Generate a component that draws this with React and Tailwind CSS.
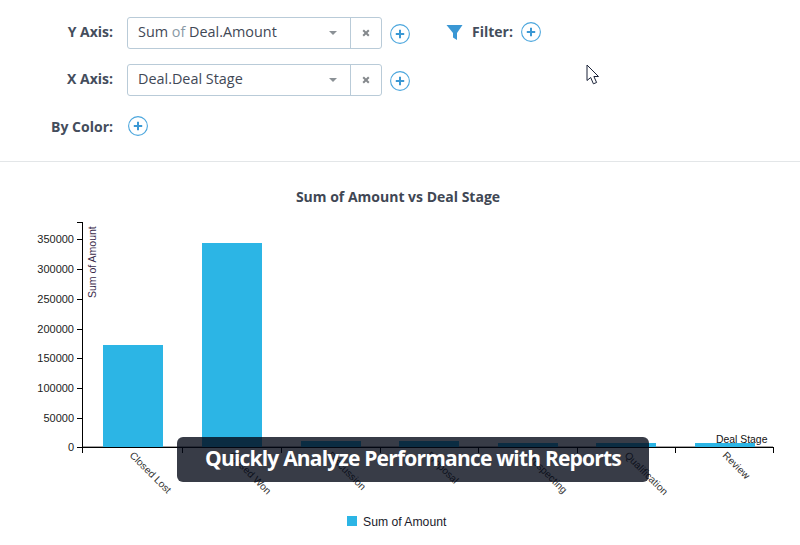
import React from "react";

const openSans = { fontFamily: '"Open Sans", sans-serif' };

function Plus({ className = "" }) {
  return (
    <svg width="20" height="20" viewBox="0 0 20 20" className={`shrink-0 ${className}`}>
      <circle cx="10" cy="10" r="9.4" fill="white" stroke="#4ba6dd" strokeWidth="1.1" />
      <path d="M10 5.8v8.4M5.8 10h8.4" stroke="#3b98d4" strokeWidth="2" />
    </svg>
  );
}

function Select({ children }) {
  return (
    <div className="w-[255px] h-[32px] flex border border-[#b9cbd8] rounded-[3px] bg-white">
      <div className="flex-1 flex items-center pl-[10px] pr-[13px] pb-[2px] justify-between text-[14.4px] text-[#3f4856]">
        <span>{children}</span>
        <span className="w-0 h-0 mt-[2px] border-x-[4px] border-x-transparent border-t-[4px] border-t-[#8b9196]" />
      </div>
      <div className="w-[31px] border-l border-[#b9cbd8] flex items-center justify-center">
        <svg width="8" height="8" viewBox="0 0 8 8">
          <path d="M1.2 1.2l5.6 5.6M6.8 1.2L1.2 6.8" stroke="#85898d" strokeWidth="2" />
        </svg>
      </div>
    </div>
  );
}

const yTicks = [
  [239, "350000"],
  [269, "300000"],
  [299, "250000"],
  [329, "200000"],
  [358, "150000"],
  [388, "100000"],
  [418, "50000"],
  [447, "0"],
];
const xTicks = [82, 182, 281, 380, 478, 577, 675, 773];
const bars = [
  [103, 345, "Closed Lost", 129, 456],
  [202, 243, "Closed Won", 228, 456],
  [301, 441, "Discussion", 327, 456],
  [399, 441, "Proposal", 426, 456],
  [498, 443, "Prospecting", 525, 456],
  [596, 443, "Qualification", 624, 456],
  [695, 443, "Review", 722, 456],
];

function Chart() {
  return (
    <svg
      width="800"
      height="383"
      viewBox="0 162 800 383"
      className="block"
      style={{ fontFamily: '"Liberation Sans", Arial, sans-serif' }}
    >
      <text x="398" y="202" textAnchor="middle" fontSize="14" fontWeight="700" fill="#3f4754" style={openSans}>
        Sum of Amount vs Deal Stage
      </text>
      <line x1="82" x2="773" y1="446.5" y2="446.5" stroke="#a4a4a4" strokeWidth="1" />
      {bars.map(([x, top]) => (
        <rect key={x} x={x} y={top} width="60" height={447 - top} fill="#2cb5e5" />
      ))}
      <line x1="82" x2="773" y1="447.5" y2="447.5" stroke="#000" strokeWidth="1" />
      <path d="M82.5 222v231" stroke="#000" fill="none" />
      <path d="M77 222.5h6" stroke="#000" />
      {yTicks.map(([y, t]) => (
        <g key={t}>
          <line x1="77" x2="82" y1={y + 0.5} y2={y + 0.5} stroke="#000" />
          <text x="74" y={y + 4} textAnchor="end" fontSize="11" fill="#222">
            {t}
          </text>
        </g>
      ))}
      {xTicks.map((x) => (
        <line key={x} x1={x + 0.5} x2={x + 0.5} y1="447" y2="453" stroke="#000" />
      ))}
      <text transform="translate(96 298) rotate(-90)" fontSize="10.5" fill="#3a2a4a">
        Sum of Amount
      </text>
      {bars.map(([x, , label, lx, ly]) => (
        <text key={x} transform={`translate(${lx} ${ly}) rotate(45)`} fontSize="10.2" fill="#333">
          {label}
        </text>
      ))}
      <text x="716" y="443" fontSize="10.4" fill="#111">
        Deal Stage
      </text>
      <rect x="347" y="516" width="10" height="10" fill="#2cb5e5" />
      <text x="363" y="526" fontSize="12.2" fill="#1a1a2a">
        Sum of Amount
      </text>
    </svg>
  );
}

export default function App() {
  return (
    <div className="relative w-[800px] h-[545px] overflow-hidden bg-white" style={openSans}>
      <div className="h-[162px] border-b border-[#e3e6e8] pt-[17px]">
        <div className="flex items-start h-[32px]">
          <div className="w-[113px] text-right text-[14px] font-bold text-[#444d5c] leading-[30px]">Y Axis:</div>
          <div className="ml-[14px]">
            <Select>
              Sum <span className="text-[#8a9aa6]">of</span> Deal.Amount
            </Select>
          </div>
          <Plus className="ml-[8px] mt-[7px]" />
          <svg width="18" height="18" viewBox="0 0 18 18" className="ml-[36px] mt-[6px]">
            <path d="M0.5 2h16L11 10v7l-4-2.5V10z" fill="#3a97d4" />
          </svg>
          <div className="ml-[8px] text-[14px] font-bold text-[#444d5c] leading-[30px]">Filter:</div>
          <Plus className="ml-[8px] mt-[5px]" />
        </div>
        <div className="flex items-start h-[32px] mt-[15px]">
          <div className="w-[113px] text-right text-[14px] font-bold text-[#444d5c] leading-[30px]">X Axis:</div>
          <div className="ml-[14px]">
            <Select>Deal.Deal Stage</Select>
          </div>
          <Plus className="ml-[8px] mt-[7px]" />
        </div>
        <div className="flex items-center h-[20px] mt-[20px]">
          <div className="w-[113px] text-right text-[14px] font-bold text-[#444d5c]">By Color:</div>
          <Plus className="ml-[15px]" />
        </div>
      </div>
      <Chart />
      <div className="absolute left-[177px] top-[437px] w-[472px] h-[45px] rounded-[6px] pb-[1px] bg-[rgba(3,8,21,0.79)] flex items-center justify-center">
        <span className="text-[21px] font-bold text-white tracking-[-0.8px] whitespace-nowrap" style={openSans}>
          Quickly Analyze Performance with Reports
        </span>
      </div>
      <svg width="15" height="21" viewBox="0 0 15 21" className="absolute left-[586px] top-[64px]">
        <path d="M1 1v15.5l3.7-3 2.7 6.3 3.2-1.3-2.7-6H12.5z" fill="white" stroke="#1a2238" strokeWidth="1" />
      </svg>
    </div>
  );
}
